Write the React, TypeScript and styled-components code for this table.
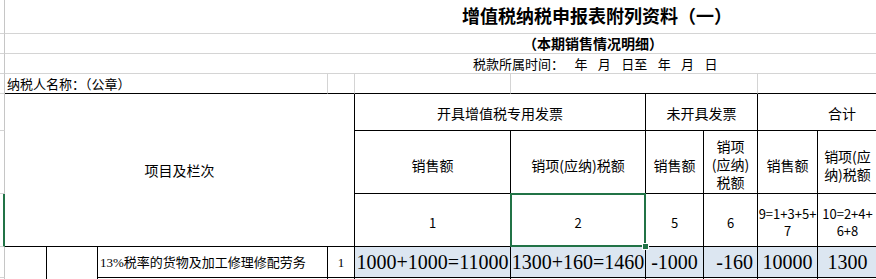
import React from "react";
import styled, { createGlobalStyle } from "styled-components";

const GRID = "#d4d4d4";
const INK = "#000";
const GREEN = "#217346";
const FILL = "#dce6f1";
const SANS = `"Noto Sans CJK SC", "Noto Sans", sans-serif`;
const SERIF = `"Liberation Serif", "Noto Sans CJK SC", serif`;

const GlobalStyle = createGlobalStyle`
  html, body { margin: 0; padding: 0; background: #fff; overflow: hidden; }
  #root { width: 876px; height: 279px; overflow: hidden; }
`;

type Edge = "grid" | "ink" | "none";

interface CellProps {
  $c: number;
  $cs?: number;
  $r: number;
  $rs?: number;
  $right?: Edge;
  $bottom?: Edge;
  $fill?: boolean;
  $pt?: number;
}

const edge = (e: Edge = "grid") =>
  e === "none" ? "none" : `1px solid ${e === "ink" ? INK : GRID}`;

const Viewport = styled.div`
  width: 876px;
  height: 279px;
  overflow: hidden;
  background: #fff;
`;

const Sheet = styled.div`
  display: grid;
  grid-template-columns: 5px 42px 51px 230px 27px 156px 135px 58px 54px 60px 60px 49px;
  grid-template-rows: 34px 20px 20px 20px 37px 63px 53px 31px 30px;
  width: max-content;
`;

const Cell = styled.div<CellProps>`
  grid-column: ${(p) => p.$c} / span ${(p) => p.$cs ?? 1};
  grid-row: ${(p) => p.$r} / span ${(p) => p.$rs ?? 1};
  box-sizing: border-box;
  border-right: ${(p) => edge(p.$right)};
  border-bottom: ${(p) => edge(p.$bottom)};
  background: ${(p) => (p.$fill ? FILL : "#fff")};
  display: flex;
  align-items: center;
  justify-content: center;
  text-align: center;
  min-width: 0;
  overflow: hidden;
  white-space: nowrap;
  padding-top: ${(p) => p.$pt ?? 0}px;
  font-family: ${SANS};
  font-size: 14px;
  line-height: 17px;
  color: #000;
`;

const RowHead = styled(Cell)<{ $active?: boolean }>`
  border-right: ${(p) => (p.$active ? `2px solid ${GREEN}` : "1px solid #c6c6c6")};
  border-bottom: 1px solid ${GRID};
`;

const TitleCell = styled(Cell)`
  justify-content: flex-start;
  padding-left: 457px;
  padding-bottom: 2px;
  font-size: 18px;
  font-weight: 700;
`;

const SubtitleCell = styled(Cell)`
  justify-content: flex-start;
  padding-left: 518px;
  font-size: 14px;
  font-weight: 700;
`;

const PeriodCell = styled(Cell)`
  justify-content: flex-start;
  padding-left: 468px;
  font-size: 13px;
  white-space: pre;
  word-spacing: 2.3px;
`;

const TaxpayerCell = styled(Cell)`
  justify-content: flex-start;
  padding-left: 2px;
  font-size: 13px;
`;

const HeadCell = styled(Cell)`
  font-size: 14px;
  line-height: 18px;
`;

const IndexCell = styled(Cell)`
  font-size: 13px;
  line-height: 17px;
`;

const ItemCell = styled(Cell)`
  justify-content: flex-start;
  padding-left: 2px;
  font-family: ${SERIF};
  font-size: 13px;
`;

const LineNo = styled(Cell)`
  font-family: ${SERIF};
  font-size: 13px;
`;

const NumCell = styled(Cell)<{ $end?: boolean }>`
  justify-content: ${(p) => (p.$end ? "flex-end" : "center")};
  padding-right: ${(p) => (p.$end ? 4 : 0)}px;
  font-family: ${SERIF};
  font-size: 20px;
`;

const Selection = styled.div<{ $c: number; $r: number }>`
  grid-column: ${(p) => p.$c};
  grid-row: ${(p) => p.$r};
  position: relative;
  z-index: 2;
  margin: -1px 0 0 -1px;
  box-sizing: border-box;
  border: 2px solid ${GREEN};
  pointer-events: none;

  &::after {
    content: "";
    position: absolute;
    right: -4px;
    bottom: -4px;
    width: 5px;
    height: 5px;
    background: ${GREEN};
    box-shadow: 0 0 0 1px #fff;
  }
`;

export default function App() {
  return (
    <>
      <GlobalStyle />
      <Viewport>
        <Sheet>
          {/* row heads */}
          {[1, 2, 3, 4, 5, 6, 7, 8, 9].map((r) => (
            <RowHead key={r} $c={1} $r={r} $active={r === 7} />
          ))}

          {/* title block */}
          <TitleCell $c={2} $cs={11} $r={1} $right="none">
            增值税纳税申报表附列资料（一）
          </TitleCell>
          <SubtitleCell $c={2} $cs={11} $r={2} $right="none">
            （本期销售情况明细）
          </SubtitleCell>
          <PeriodCell $c={2} $cs={11} $r={3} $right="none">
            {"税款所属时间：  年  月  日至  年  月  日"}
          </PeriodCell>

          <TaxpayerCell $c={2} $cs={3} $r={4} $bottom="ink">
            纳税人名称：（公章）
          </TaxpayerCell>
          <Cell $c={5} $r={4} $bottom="ink" />
          <Cell $c={6} $r={4} $bottom="ink" />
          <Cell $c={7} $cs={3} $r={4} $bottom="ink" />
          <Cell $c={10} $cs={3} $r={4} $bottom="ink" $right="none" />

          {/* header */}
          <HeadCell $c={2} $cs={4} $r={5} $rs={3} $right="ink" $bottom="ink">
            项目及栏次
          </HeadCell>
          <HeadCell $c={6} $cs={2} $r={5} $right="ink" $bottom="ink" $pt={2}>
            开具增值税专用发票
          </HeadCell>
          <HeadCell $c={8} $cs={2} $r={5} $right="ink" $bottom="ink" $pt={2}>
            未开具发票
          </HeadCell>
          <HeadCell $c={10} $cs={3} $r={5} $right="ink" $bottom="ink" $pt={2}>
            合计
          </HeadCell>

          <HeadCell $c={6} $r={6} $right="ink" $bottom="ink" $pt={5}>
            销售额
          </HeadCell>
          <HeadCell $c={7} $r={6} $right="ink" $bottom="ink" $pt={5}>
            销项(应纳)税额
          </HeadCell>
          <HeadCell $c={8} $r={6} $right="ink" $bottom="ink" $pt={5}>
            销售额
          </HeadCell>
          <HeadCell $c={9} $r={6} $right="ink" $bottom="ink" $pt={3}>
            销项
            <br />
            (应纳)
            <br />
            税额
          </HeadCell>
          <HeadCell $c={10} $r={6} $right="ink" $bottom="ink" $pt={5}>
            销售额
          </HeadCell>
          <HeadCell $c={11} $r={6} $right="ink" $bottom="ink" $pt={5}>
            销项(应
            <br />
            纳)税额
          </HeadCell>
          <HeadCell $c={12} $r={6} $right="ink" $bottom="ink" />

          <IndexCell $c={6} $r={7} $right="ink" $bottom="ink" $pt={4}>
            1
          </IndexCell>
          <IndexCell $c={7} $r={7} $right="ink" $bottom="ink" $pt={4}>
            2
          </IndexCell>
          <IndexCell $c={8} $r={7} $right="ink" $bottom="ink" $pt={4}>
            5
          </IndexCell>
          <IndexCell $c={9} $r={7} $right="ink" $bottom="ink" $pt={4}>
            6
          </IndexCell>
          <IndexCell $c={10} $r={7} $right="ink" $bottom="ink" $pt={4}>
            9=1+3+5+
            <br />7
          </IndexCell>
          <IndexCell $c={11} $r={7} $right="ink" $bottom="ink" $pt={4}>
            10=2+4+
            <br />
            6+8
          </IndexCell>
          <IndexCell $c={12} $r={7} $right="ink" $bottom="ink" />
          <Selection $c={7} $r={7} />

          {/* data row */}
          <Cell $c={2} $r={8} $rs={2} $right="ink" $bottom="ink" />
          <Cell $c={3} $r={8} $rs={2} $right="ink" $bottom="ink" />
          <ItemCell $c={4} $r={8} $right="ink" $bottom="ink">
            13%税率的货物及加工修理修配劳务
          </ItemCell>
          <LineNo $c={5} $r={8} $right="ink" $bottom="ink">
            1
          </LineNo>
          <NumCell $c={6} $r={8} $right="ink" $bottom="ink" $fill>
            1000+1000=11000
          </NumCell>
          <NumCell $c={7} $r={8} $right="ink" $bottom="ink" $fill>
            1300+160=1460
          </NumCell>
          <NumCell $c={8} $r={8} $right="ink" $bottom="ink" $fill>
            -1000
          </NumCell>
          <NumCell $c={9} $r={8} $right="ink" $bottom="ink" $fill $end>
            -160
          </NumCell>
          <NumCell $c={10} $r={8} $right="ink" $bottom="ink" $fill>
            10000
          </NumCell>
          <NumCell $c={11} $r={8} $right="ink" $bottom="ink" $fill>
            1300
          </NumCell>
          <NumCell $c={12} $r={8} $right="ink" $bottom="ink" $fill />

          {/* next row (partially visible) */}
          {[4, 5, 6, 7, 8, 9, 10, 11, 12].map((c) => (
            <Cell key={c} $c={c} $r={9} $right="ink" $bottom="ink" />
          ))}
        </Sheet>
      </Viewport>
    </>
  );
}
